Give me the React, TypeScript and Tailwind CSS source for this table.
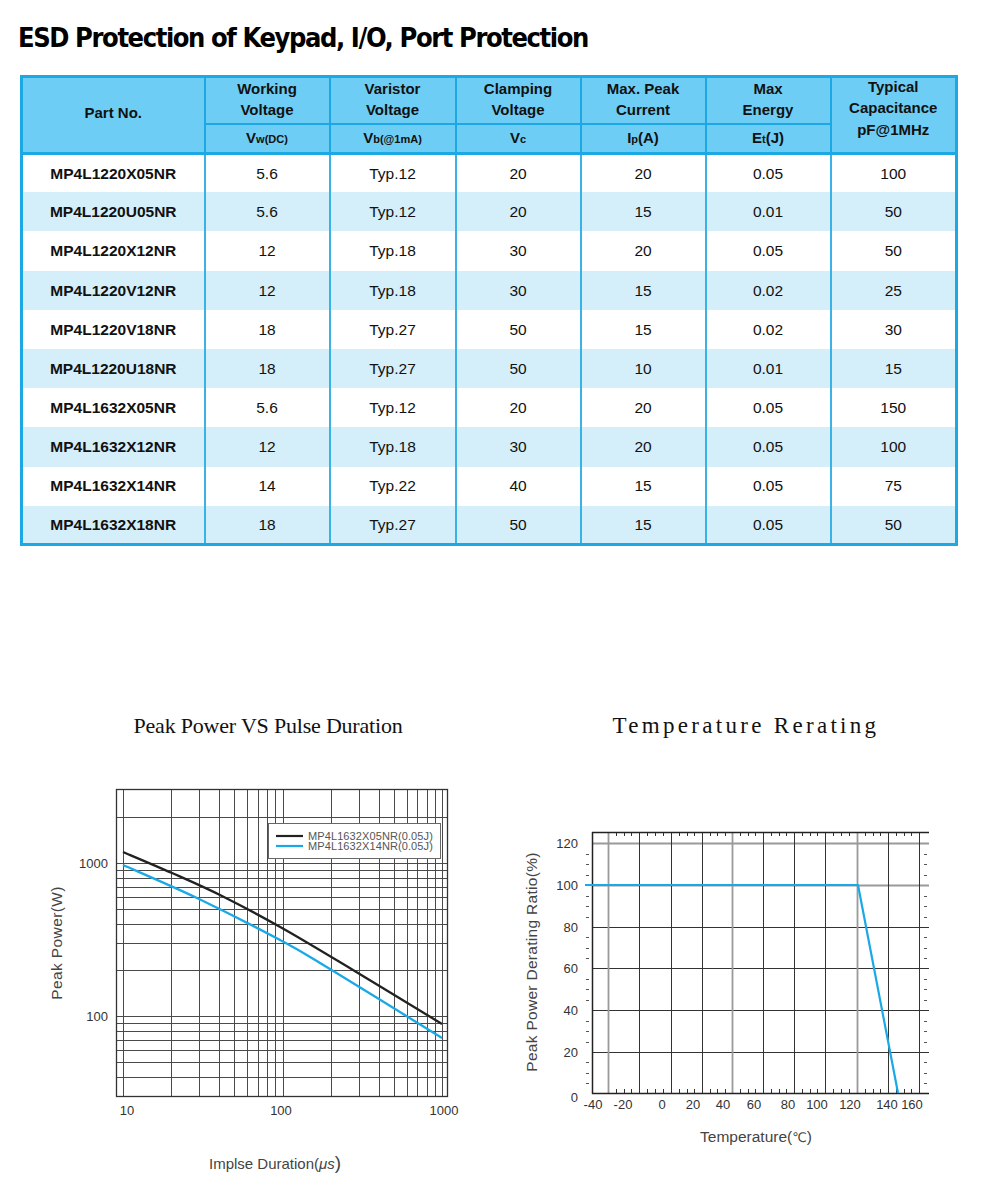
import React from "react";

const rows: string[][] = [
  ["MP4L1220X05NR", "5.6", "Typ.12", "20", "20", "0.05", "100"],
  ["MP4L1220U05NR", "5.6", "Typ.12", "20", "15", "0.01", "50"],
  ["MP4L1220X12NR", "12", "Typ.18", "30", "20", "0.05", "50"],
  ["MP4L1220V12NR", "12", "Typ.18", "30", "15", "0.02", "25"],
  ["MP4L1220V18NR", "18", "Typ.27", "50", "15", "0.02", "30"],
  ["MP4L1220U18NR", "18", "Typ.27", "50", "10", "0.01", "15"],
  ["MP4L1632X05NR", "5.6", "Typ.12", "20", "20", "0.05", "150"],
  ["MP4L1632X12NR", "12", "Typ.18", "30", "20", "0.05", "100"],
  ["MP4L1632X14NR", "14", "Typ.22", "40", "15", "0.05", "75"],
  ["MP4L1632X18NR", "18", "Typ.27", "50", "15", "0.05", "50"],
];

const SANS = "font-['Liberation_Sans',Arial,sans-serif]";

function smooth(pts: [number, number][]) {
  let d = `M${pts[0][0]},${pts[0][1]}`;
  for (let i = 0; i < pts.length - 1; i++) {
    const p0 = pts[Math.max(0, i - 1)];
    const p1 = pts[i];
    const p2 = pts[i + 1];
    const p3 = pts[Math.min(pts.length - 1, i + 2)];
    const c1x = p1[0] + (p2[0] - p0[0]) / 6;
    const c1y = p1[1] + (p2[1] - p0[1]) / 6;
    const c2x = p2[0] - (p3[0] - p1[0]) / 6;
    const c2y = p2[1] - (p3[1] - p1[1]) / 6;
    d += ` C${c1x.toFixed(1)},${c1y.toFixed(1)} ${c2x.toFixed(1)},${c2y.toFixed(1)} ${p2[0]},${p2[1]}`;
  }
  return d;
}

function PowerChart() {
  const X = (v: number) => 123 + 159.5 * Math.log10(v / 10);
  const Y = (v: number) => 863 - 153 * Math.log10(v / 1000);
  const xs: number[] = [];
  for (let d = 10; d <= 100; d *= 10) for (let k = 1; k <= 9; k++) xs.push(k * d);
  xs.push(1000);
  const ys: number[] = [40, 50, 60, 70, 80, 90, 100, 200, 300, 400, 500, 600, 700, 800, 900, 1000, 2000];
  const black = smooth([
    [123, 852],
    [172, 873],
    [222, 896],
    [282, 928],
    [353, 970],
    [442, 1024],
  ]);
  const blue = smooth([
    [123, 865],
    [197, 898],
    [282, 941],
    [330, 969],
    [442, 1038],
  ]);
  return (
    <svg width={490} height={500} viewBox="0 690 490 500" className="block shrink-0">
      <text x={268} y={733} textAnchor="middle" fontFamily="'Liberation Serif', 'Times New Roman', serif" fontSize={22} letterSpacing={-0.2} fill="#111">
        Peak Power VS Pulse Duration
      </text>
      {xs.map((v) => (
        <line key={"v" + v} x1={Math.round(X(v)) + 0.5} x2={Math.round(X(v)) + 0.5} y1={789} y2={1097} stroke="#4a4a4a" strokeWidth={1} />
      ))}
      {ys.map((v) => (
        <line key={"h" + v} y1={Math.round(Y(v)) + 0.5} y2={Math.round(Y(v)) + 0.5} x1={116} x2={448} stroke="#4a4a4a" strokeWidth={1} />
      ))}
      <rect x={116.5} y={789.5} width={331} height={307} fill="none" stroke="#333" strokeWidth={1.3} />
      <path d={black} fill="none" stroke="#222" strokeWidth={2.3} strokeLinejoin="round" />
      <path d={blue} fill="none" stroke="#1aa9e7" strokeWidth={2.3} strokeLinejoin="round" />
      <rect x={268.5} y={823.5} width={172} height={35} fill="#fff" stroke="#666" strokeWidth={1} />
      <line x1={276} x2={303} y1={836} y2={836} stroke="#222" strokeWidth={2.2} />
      <line x1={276} x2={303} y1={846} y2={846} stroke="#1aa9e7" strokeWidth={2.2} />
      <g fontFamily="'Liberation Sans', Arial, sans-serif" fontSize={11} fill="#555" letterSpacing={0.1}>
        <text x={308} y={840}>MP4L1632X05NR(0.05J)</text>
        <text x={308} y={850}>MP4L1632X14NR(0.05J)</text>
      </g>
      <g fontFamily="'Liberation Sans', Arial, sans-serif" fontSize={13} fill="#333">
        <text x={108} y={868} textAnchor="end">1000</text>
        <text x={108} y={1021} textAnchor="end">100</text>
        <text x={127} y={1115} textAnchor="middle">10</text>
        <text x={281} y={1115} textAnchor="middle">100</text>
        <text x={444} y={1115} textAnchor="middle">1000</text>
      </g>
      <text
        x={0}
        y={0}
        transform="translate(62 943) rotate(-90)"
        textAnchor="middle"
        fontFamily="'Liberation Sans', Arial, sans-serif"
        fontSize={15.5}
        letterSpacing={0.4}
        fill="#444"
      >
        Peak Power(W)
      </text>
      <text x={209} y={1169} fontFamily="'Liberation Sans', Arial, sans-serif" fontSize={15} fill="#444">
        Implse Duration(<tspan fontStyle="italic">μs</tspan>
        <tspan fontSize={19}>)</tspan>
      </text>
    </svg>
  );
}

function TempChart() {
  const vx = [
    { x: 608, g: true },
    { x: 639 },
    { x: 671 },
    { x: 702 },
    { x: 732, g: true },
    { x: 763 },
    { x: 794 },
    { x: 825 },
    { x: 857, g: true },
    { x: 888 },
    { x: 919 },
  ];
  const hy = [843, 885, 927, 968, 1010, 1052, 1093];
  const xTicks: number[] = [];
  for (let i = 0; i < vx.length - 1; i++) {
    const d = (vx[i + 1].x - vx[i].x) / 4;
    for (let k = 1; k <= 3; k++) xTicks.push(Math.round(vx[i].x + k * d));
  }
  const yTicks: number[] = [];
  for (let i = 0; i < hy.length - 1; i++) {
    const d = (hy[i + 1] - hy[i]) / 4;
    for (let k = 1; k <= 3; k++) yTicks.push(Math.round(hy[i] + k * d));
  }
  const yLabels: [string, number][] = [
    ["120", 843],
    ["100", 885],
    ["80", 927],
    ["60", 968],
    ["40", 1010],
    ["20", 1052],
  ];
  const xLabels: [string, number][] = [
    ["-40", 593],
    ["-20", 623],
    ["0", 662],
    ["20", 693],
    ["40", 723],
    ["60", 754],
    ["80", 788],
    ["100", 817],
    ["120", 850],
    ["140", 887],
    ["160", 912],
  ];
  return (
    <svg width={495} height={500} viewBox="490 690 495 500" className="block shrink-0">
      <text x={746} y={733} textAnchor="middle" fontFamily="'Liberation Serif', 'Times New Roman', serif" fontSize={23} letterSpacing={3.3} fill="#111">
        Temperature Rerating
      </text>
      {hy.slice(0, 6).map((y, i) => (
        <line
          key={"h" + y}
          x1={592}
          x2={929}
          y1={y + 0.5}
          y2={y + 0.5}
          stroke={i < 2 ? "#9a9a9a" : "#333"}
          strokeWidth={i < 2 ? 1.8 : 1}
        />
      ))}
      {vx.map((v) => (
        <line
          key={"v" + v.x}
          x1={v.x + 0.5}
          x2={v.x + 0.5}
          y1={832}
          y2={1093}
          stroke={v.g ? "#9a9a9a" : "#333"}
          strokeWidth={v.g ? 1.8 : 1}
        />
      ))}
      {xTicks.map((x) => (
        <g key={"t" + x}>
          <line x1={x + 0.5} x2={x + 0.5} y1={832} y2={836} stroke="#333" strokeWidth={1} />
          <line x1={x + 0.5} x2={x + 0.5} y1={1089} y2={1093} stroke="#333" strokeWidth={1} />
        </g>
      ))}
      {yTicks.map((y) => (
        <g key={"y" + y}>
          <line x1={586} x2={589} y1={y + 0.5} y2={y + 0.5} stroke="#555" strokeWidth={1} />
          <line x1={924} x2={927} y1={y + 0.5} y2={y + 0.5} stroke="#555" strokeWidth={1} />
        </g>
      ))}
      <line x1={592} x2={929} y1={832.5} y2={832.5} stroke="#222" strokeWidth={1.5} />
      <line x1={592.5} x2={592.5} y1={832} y2={1094} stroke="#222" strokeWidth={1.5} />
      <line x1={592} x2={929} y1={1093.5} y2={1093.5} stroke="#222" strokeWidth={1.5} />
      <polyline points="585,885 858,885 898,1093" fill="none" stroke="#1aa9e7" strokeWidth={2.2} strokeLinejoin="round" />
      <g fontFamily="'Liberation Sans', Arial, sans-serif" fontSize={13} fill="#333">
        {yLabels.map(([t, y]) => (
          <text key={t} x={578} y={y + 4.5} textAnchor="end">
            {t}
          </text>
        ))}
        <text x={578} y={1102} textAnchor="end">0</text>
        {xLabels.map(([t, x]) => (
          <text key={t} x={x} y={1109} textAnchor="middle">
            {t}
          </text>
        ))}
      </g>
      <text
        x={0}
        y={0}
        transform="translate(537 962) rotate(-90)"
        textAnchor="middle"
        fontFamily="'Liberation Sans', Arial, sans-serif"
        fontSize={15.5}
        letterSpacing={0.3}
        fill="#444"
      >
        Peak Power Derating Ratio(%)
      </text>
      <text x={756} y={1142} textAnchor="middle" fontFamily="'Liberation Sans', Arial, sans-serif" fontSize={15.5} fill="#444">
        Temperature(<tspan fontFamily="'DejaVu Sans', sans-serif" fontSize={13}>℃</tspan>)
      </text>
    </svg>
  );
}

export default function App() {
  const bd = "border-[#1ba8e3]";
  return (
    <div className="w-[985px] min-h-[1200px] bg-white">
      <div className="h-[75px] flex items-center pl-[18px]">
        <h1 className="font-['DejaVu_Sans_Condensed','DejaVu_Sans',sans-serif] [font-stretch:condensed] font-bold text-[27px] leading-[32px] tracking-[-1.4px] text-black">
          ESD Protection of Keypad, I/O, Port Protection
        </h1>
      </div>
      <table className={`ml-[20px] w-[935px] table-fixed border-collapse border-[3px] ${bd} ${SANS} text-[#111]`}>
        <colgroup>
          <col className="w-[183px]" />
          <col className="w-[125px]" />
          <col className="w-[126px]" />
          <col className="w-[125px]" />
          <col className="w-[125px]" />
          <col className="w-[125px]" />
          <col className="w-[126px]" />
        </colgroup>
        <thead className="bg-[#6dcdf5] text-[15px] leading-[21px] font-bold">
          <tr className="h-[42px]">
            <th rowSpan={2} className={`border-r-2 border-b-[3px] ${bd} align-middle pb-[4px]`}>
              Part No.
            </th>
            <th className={`border-r-2 border-b-2 ${bd} pb-[3px]`}>
              Working
              <br />
              Voltage
            </th>
            <th className={`border-r-2 border-b-2 ${bd} pb-[3px]`}>
              Varistor
              <br />
              Voltage
            </th>
            <th className={`border-r-2 border-b-2 ${bd} pb-[3px]`}>
              Clamping
              <br />
              Voltage
            </th>
            <th className={`border-r-2 border-b-2 ${bd} pb-[3px]`}>
              Max. Peak
              <br />
              Current
            </th>
            <th className={`border-r-2 border-b-2 ${bd} pb-[3px]`}>
              Max
              <br />
              Energy
            </th>
            <th rowSpan={2} className={`border-b-[3px] ${bd} align-top`}>
              <div className="-mt-[2px]">
                Typical
                <br />
                Capacitance
                <br />
                <span className="inline-block pt-[1px]">pF@1MHz</span>
              </div>
            </th>
          </tr>
          <tr className="h-[29px]">
            <th className={`border-r-2 border-b-[3px] ${bd}`}>
              V<span className="text-[11px]">w(DC)</span>
            </th>
            <th className={`border-r-2 border-b-[3px] ${bd}`}>
              V<span className="text-[11px]">b(@1mA)</span>
            </th>
            <th className={`border-r-2 border-b-[3px] ${bd}`}>
              V<span className="text-[11px]">c</span>
            </th>
            <th className={`border-r-2 border-b-[3px] ${bd}`}>
              I<span className="text-[11px]">p</span>(A)
            </th>
            <th className={`border-r-2 border-b-[3px] ${bd}`}>
              E<span className="text-[11px]">t</span>(J)
            </th>
          </tr>
        </thead>
        <tbody className="text-[15.5px]">
          {rows.map((r, i) => (
            <tr key={r[0]} className={`h-[39.2px] ${i % 2 === 1 ? "bg-[#d4eefa]" : "bg-white"}`}>
              {r.map((c, j) => (
                <td
                  key={j}
                  className={`text-center align-middle ${j < 6 ? "border-r-2 border-[#3ab2e8]" : ""} ${j === 0 ? "font-bold" : ""}`}
                >
                  {c}
                </td>
              ))}
            </tr>
          ))}
        </tbody>
      </table>
      <div className="mt-[144px] flex">
        <PowerChart />
        <TempChart />
      </div>
    </div>
  );
}
